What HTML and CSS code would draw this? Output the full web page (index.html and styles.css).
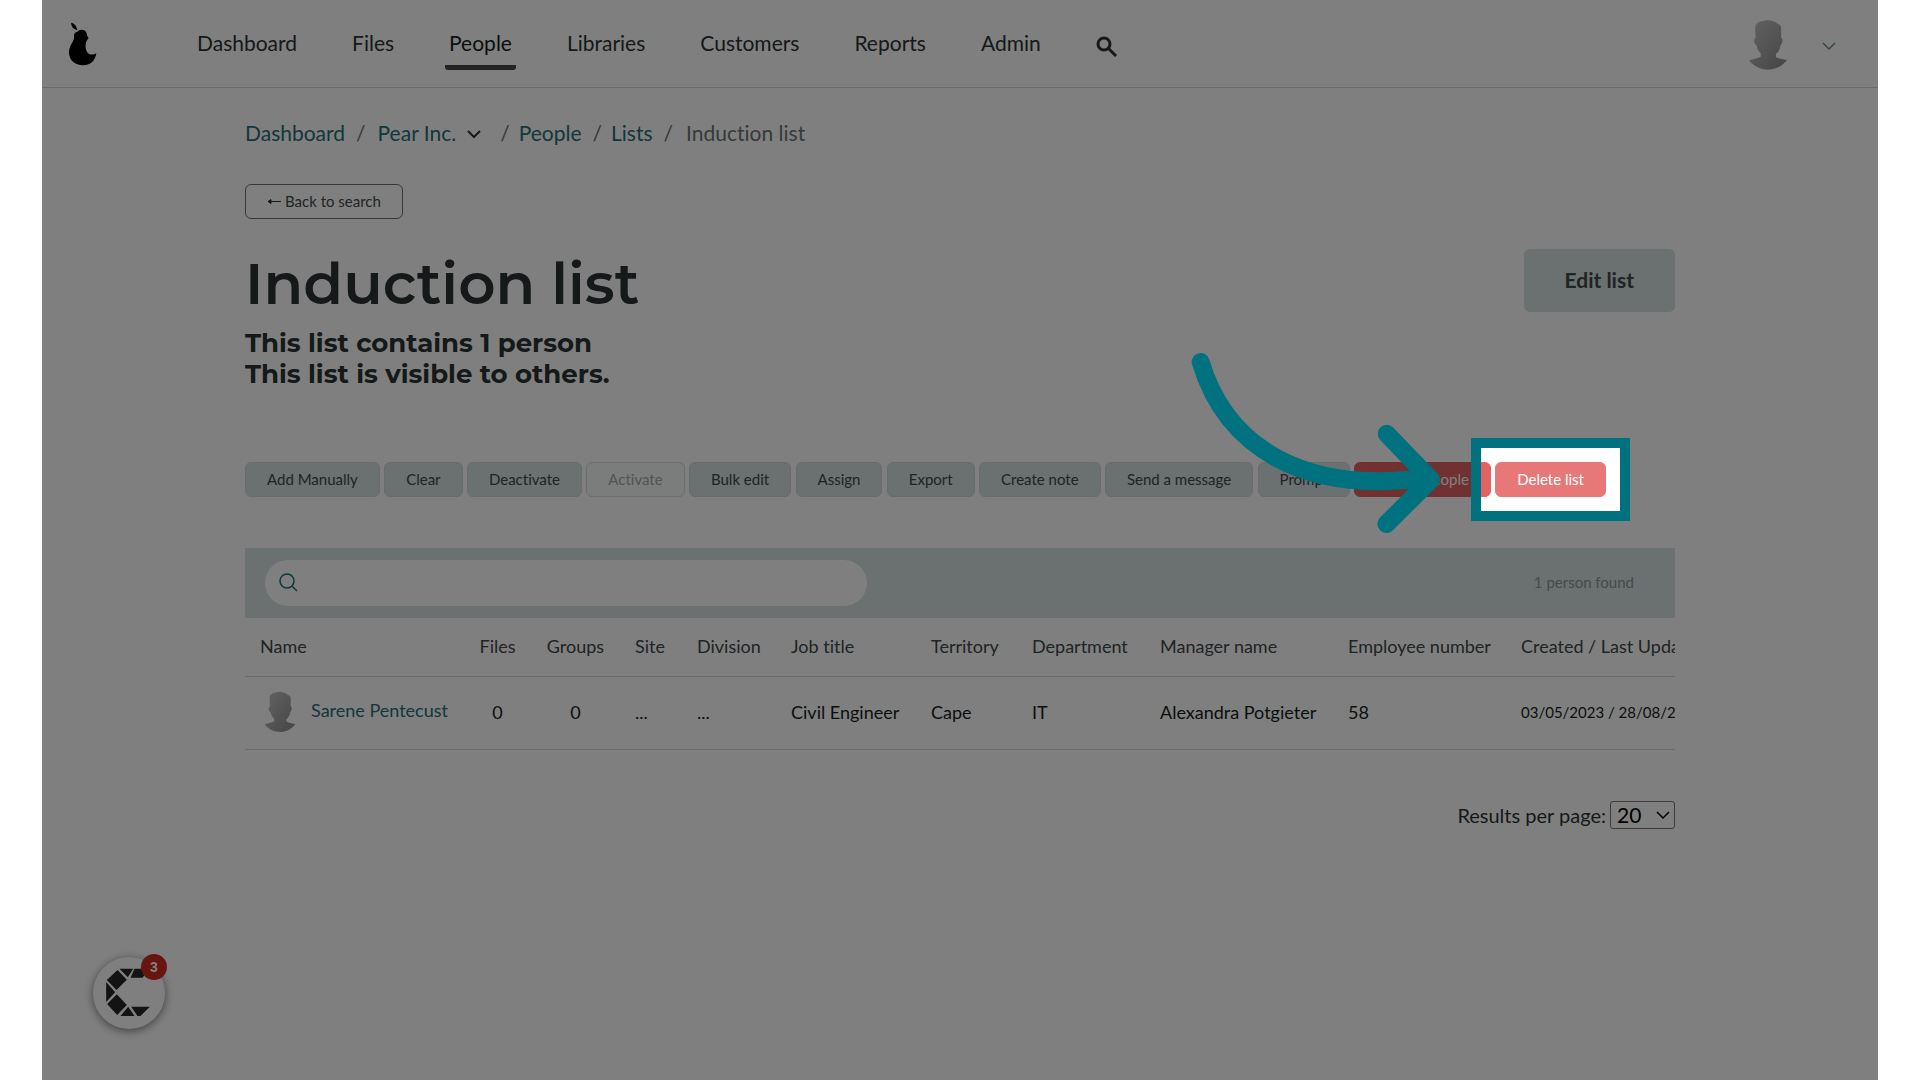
FILE: index.html
```html
<!DOCTYPE html>
<html lang="en">
<head>
<meta charset="utf-8">
<title>Induction list</title>
<link rel="stylesheet" href="styles.css">
</head>
<body>
<svg class="defs" aria-hidden="true">
  <defs>
    <linearGradient id="avatar-fill" x1="0" y1="0" x2="1" y2="1">
      <stop offset="0" stop-color="#c6c6c6"/>
      <stop offset="1" stop-color="#8a8a8a"/>
    </linearGradient>
    <symbol id="avatar" viewBox="0 0 120 152">
      <path fill="url(#avatar-fill)" d="M21 26C20 14 30 4 44 3C55 -1 68 0 74 4C82 5 86 9 91 13C100 14 101 24 100 34L100 54C106 55 105 70 98 77C97 88 92 96 84 103L84 113C96 118 110 119 118 122C100 143 80 151 60 151C40 151 20 143 2 123C14 119 28 117 38 112L38 101C30 95 27 87 25 77C16 73 16 56 22 55Z"/>
    </symbol>
  </defs>
</svg>
<div class="stage">
  <header class="topbar">
    <a class="logo" href="#" aria-label="Home">
      <svg viewBox="0 0 84 132" width="28" height="44"><path d="M6 2C17 4 23 12 25 25C13 22 7 14 6 2ZM24 31C29 22 45 20 51 30C54 36 55 43 59 49C46 60 47 88 60 96C66 99 76 98 82 94C79 117 63 130 42 130C18 130 0 115 0 91C0 68 17 58 15 44C14 35 18 31 24 29Z"/></svg>
    </a>
    <nav class="menu">
      <a href="#">Dashboard</a>
      <a href="#">Files</a>
      <a class="current" href="#">People</a>
      <a href="#">Libraries</a>
      <a href="#">Customers</a>
      <a href="#">Reports</a>
      <a href="#">Admin</a>
      <button class="icon-button menu-search" type="button" aria-label="Search">
        <svg viewBox="0 0 22 22" width="22" height="22" fill="none" stroke="#2b3333" stroke-width="3"><circle cx="8" cy="8" r="6"/><path d="M12 12L20 20"/></svg>
      </button>
    </nav>
    <button class="icon-button account" type="button" aria-label="Account menu">
      <svg width="40" height="50"><use href="#avatar"/></svg>
      <svg class="account-arrow" viewBox="0 0 14 9" width="14" height="9" fill="none" stroke="#6f8793" stroke-width="1.500"><path d="M1 1L7 7L13 1"/></svg>
    </button>
  </header>

  <main class="page">
    <nav class="crumbs" aria-label="Breadcrumb">
      <a href="#">Dashboard</a><span class="slash">/</span>
      <a class="company" href="#">Pear Inc.</a>
      <svg class="crumb-arrow" viewBox="0 0 16 11" width="16" height="11" fill="none" stroke="#2b3333" stroke-width="2"><path d="M2 2L8 8L14 2"/></svg>
      <span class="slash">/</span>
      <a href="#">People</a><span class="slash">/</span>
      <a href="#">Lists</a><span class="slash">/</span>
      <span class="here">Induction list</span>
    </nav>

    <button class="btn back" type="button"><svg viewBox="0 0 14 8" width="14" height="8" fill="none" stroke="#2b3333" stroke-width="1"><path d="M1 4.500H14"/><path fill="#2b3333" d="M1 4.500L4 2.500V6.500Z"/></svg>Back to search</button>

    <div class="heading">
      <div>
        <h1>Induction list</h1>
        <p class="summary">This list contains 1 person<br>This list is visible to others.</p>
      </div>
      <button class="edit" type="button">Edit list</button>
    </div>

    <div class="actions">
      <button class="btn" type="button">Add Manually</button>
      <button class="btn" type="button">Clear</button>
      <button class="btn" type="button">Deactivate</button>
      <button class="btn" type="button" disabled>Activate</button>
      <button class="btn" type="button">Bulk edit</button>
      <button class="btn" type="button">Assign</button>
      <button class="btn" type="button">Export</button>
      <button class="btn" type="button">Create note</button>
      <button class="btn" type="button">Send a message</button>
      <button class="btn" type="button">Prompt</button>
      <button class="btn danger" type="button">Delete people</button>
      <div class="tour-target">
        <button class="btn danger hover" type="button">Delete list</button>
        <div class="spotlight"></div>
        <svg class="pointer" viewBox="0 0 900 600" fill="none" stroke="#00727f" stroke-width="54" stroke-linecap="round" stroke-linejoin="round"><path d="M62 66C138 320 370 465 740 413M620 281L753 419L619 552"/></svg>
      </div>
    </div>

    <section class="results">
      <div class="filter">
        <label class="search">
          <svg viewBox="0 0 20 20" width="20" height="20" fill="none" stroke="#15727d" stroke-width="1.500"><circle cx="8" cy="8" r="7"/><path d="M13 13L18 18"/></svg>
          <input type="search" aria-label="Search people">
        </label>
        <span class="count">1 person found</span>
      </div>
      <div class="table-scroll">
        <table>
          <colgroup>
            <col class="c-name"><col class="c-files"><col class="c-groups"><col class="c-site"><col class="c-division"><col class="c-job"><col class="c-territory"><col class="c-dept"><col class="c-manager"><col class="c-number"><col class="c-dates">
          </colgroup>
          <thead>
            <tr><th>Name</th><th class="num">Files</th><th class="num">Groups</th><th>Site</th><th>Division</th><th>Job title</th><th>Territory</th><th>Department</th><th>Manager name</th><th>Employee number</th><th>Created / Last Updated</th></tr>
          </thead>
          <tbody>
            <tr>
              <td><a class="person" href="#"><svg width="32" height="42"><use href="#avatar"/></svg><span>Sarene Pentecust</span></a></td>
              <td class="num">0</td><td class="num">0</td><td>...</td><td>...</td><td>Civil Engineer</td><td>Cape</td><td>IT</td><td>Alexandra Potgieter</td><td>58</td><td class="dates">03/05/2023 / 28/08/2023</td>
            </tr>
          </tbody>
        </table>
      </div>
    </section>

    <div class="paging">
      <label for="per-page">Results per page:</label>
      <span class="select">
        <select id="per-page"><option>20</option><option>50</option></select>
        <svg viewBox="0 0 14 9" width="14" height="9" fill="none" stroke="#000" stroke-width="1.500"><path d="M1 1L7 7L13 1"/></svg>
      </span>
    </div>
  </main>

  <button class="chat" type="button" aria-label="Open chat, 3 unread">
    <svg viewBox="0 0 140 150" width="47" height="50" fill="#262626"><path d="M37 6L65 35L34 66L5 36ZM43 2H84L68 28ZM88 2H134L112 29H76ZM3 42L30 73L3 102ZM35 79L65 111L36 141L6 108ZM69 116L88 144H46ZM78 116H134L106 144H97Z"/></svg>
    <span class="unread">3</span>
  </button>
</div>
</body>
</html>
```
FILE: styles.css
```css
* {
  box-sizing: border-box;
}

body {
  margin: 0;
  background: #fff;
  color: #2b3333;
  font: 21px/26px Lato, "Open Sans", sans-serif;
  font-variant-ligatures: no-common-ligatures;
}

a {
  color: #256f78;
  text-decoration: none;
}

button,
input,
select {
  font: inherit;
  color: inherit;
}

button {
  cursor: pointer;
}

.defs {
  position: absolute;
  width: 0;
  height: 0;
}

.stage {
  position: relative;
  min-height: 100vh;
  margin: 0 42px;
  overflow: hidden;
}

/* Top bar */
.topbar {
  display: flex;
  align-items: center;
  height: 88px;
  padding: 0 42px 0 27px;
  border-bottom: 1px solid #d5d8d8;
}

.logo {
  display: flex;
  width: 28px;
}

.menu {
  display: flex;
  align-items: center;
  gap: 47px;
  margin-left: 96px;
}

.menu a {
  padding: 12px 4px 9px;
  border-bottom: 5px solid transparent;
  border-radius: 3px;
  color: #2b3333;
}

.menu .current {
  color: #161c1c;
  border-color: #464646;
}

.icon-button {
  display: flex;
  align-items: center;
  padding: 0;
  border: 0;
  background: none;
}

.menu-search {
  padding: 6px 4px 0;
}

.account {
  gap: 34px;
  margin-left: auto;
  padding-top: 2px;
}

.account-arrow {
  margin-top: 4px;
}

/* Page */
.page {
  padding: 32px 203px 0;
}

.crumbs {
  display: flex;
  align-items: center;
}

.slash,
.here {
  color: #6b7575;
}

.slash {
  margin: 0 9px 0 11px;
}

.here {
  margin-left: 4px;
}

.company {
  margin-left: 3px;
}

.crumb-arrow {
  margin: 2px 7px 0 10px;
}

.btn {
  height: 35px;
  padding: 0 21px 2px;
  border: 1px solid #d0d9d9;
  border-radius: 6px;
  background: #d6e0e0;
  color: #3f4848;
  font-size: 15px;
  line-height: 20px;
}

.btn:disabled {
  border-color: #d0dcd8;
  background: #f7faf9;
  color: #a0a8a8;
}

.danger,
.hover {
  border-color: #e36262;
  background: #e36262;
  color: #fff;
}

.hover {
  border-color: #e77877;
  background: #e77877;
}

.back {
  display: flex;
  align-items: center;
  gap: 4px;
  margin-top: 38px;
  border-color: #6b7373;
  background: #fff;
}

.heading {
  display: flex;
  justify-content: space-between;
  align-items: flex-start;
  margin-top: 30px;
}

h1 {
  margin: 0;
  font: 600 58px/70px Montserrat, Inter, sans-serif;
}

.summary {
  margin: 9px 0 0;
  font: 700 26px/31px Montserrat, Inter, sans-serif;
}

.edit {
  height: 63px;
  padding: 0 41px 2px;
  border: 0;
  border-radius: 6px;
  background: #d6e0e0;
  color: #3f4848;
  font-weight: 700;
}

.actions {
  display: flex;
  justify-content: space-between;
  margin-top: 72px;
  padding-right: 69px;
}

/* Guided tour: dims everything outside the target button */
.tour-target {
  position: relative;
  display: flex;
}

.spotlight {
  position: absolute;
  z-index: 10;
  inset: -24px;
  border: 10px solid #00727f;
  box-shadow: 0 0 0 4000px rgba(0, 0, 0, 0.5);
  pointer-events: none;
}

.pointer {
  position: absolute;
  z-index: 11;
  right: 126px;
  top: -122px;
  width: 300px;
  height: 200px;
  pointer-events: none;
}

/* Results */
.results {
  margin-top: 51px;
}

.filter {
  display: flex;
  justify-content: space-between;
  align-items: center;
  height: 70px;
  padding: 0 41px 0 20px;
  background: #d6e0e0;
}

.search {
  display: flex;
  align-items: center;
  gap: 12px;
  width: 44%;
  height: 46px;
  padding: 0 14px;
  border-radius: 23px;
  background: #fff;
}

.search input {
  flex: 1;
  min-width: 0;
  border: 0;
  outline: 0;
  background: none;
}

.count {
  padding-bottom: 2px;
  color: #8a9494;
  font-size: 15px;
}

.table-scroll {
  overflow: hidden;
}

table {
  width: 1480px;
  table-layout: fixed;
  border-collapse: collapse;
  font-size: 18px;
  white-space: nowrap;
}

.c-name { width: 219px; }
.c-files { width: 67px; }
.c-groups { width: 89px; }
.c-site { width: 62px; }
.c-division { width: 94px; }
.c-job { width: 140px; }
.c-territory { width: 101px; }
.c-dept { width: 128px; }
.c-manager { width: 188px; }
.c-number { width: 173px; }

th,
td {
  padding: 0 15px;
  border-bottom: 1px solid #d5d8d8;
  text-align: left;
}

th {
  height: 58px;
  padding-bottom: 2px;
  color: #3f4848;
  font-weight: 400;
}

td {
  height: 73px;
  padding-bottom: 2px;
  color: #161c1c;
}

.num {
  text-align: center;
}

.dates {
  font-size: 15px;
}

.person {
  display: flex;
  align-items: center;
  gap: 15px;
  padding-left: 4px;
}

.person span {
  padding-bottom: 4px;
}

.paging {
  display: flex;
  justify-content: flex-end;
  align-items: center;
  gap: 4px;
  margin-top: 51px;
}

.paging label {
  font-size: 20px;
}

.select {
  position: relative;
  display: flex;
}

.select select {
  appearance: none;
  width: 65px;
  height: 28px;
  padding: 0 6px;
  border: 1px solid #767676;
  border-radius: 3px;
  background: #fff;
  color: #000;
}

.select svg {
  position: absolute;
  right: 5px;
  top: 10px;
  pointer-events: none;
}

/* Chat launcher */
.chat {
  position: absolute;
  left: 51px;
  bottom: 51px;
  display: flex;
  align-items: center;
  justify-content: center;
  width: 72px;
  height: 72px;
  padding: 0 2px 0 0;
  border: 0;
  border-radius: 50%;
  background: #fff;
  box-shadow: 0 2px 10px rgba(0, 0, 0, 0.5);
}

.unread {
  position: absolute;
  top: -3px;
  right: -2px;
  width: 26px;
  height: 26px;
  border-radius: 50%;
  background: #d02a1e;
  color: #fff;
  font: 700 14px/26px "Liberation Sans", sans-serif;
}
```
